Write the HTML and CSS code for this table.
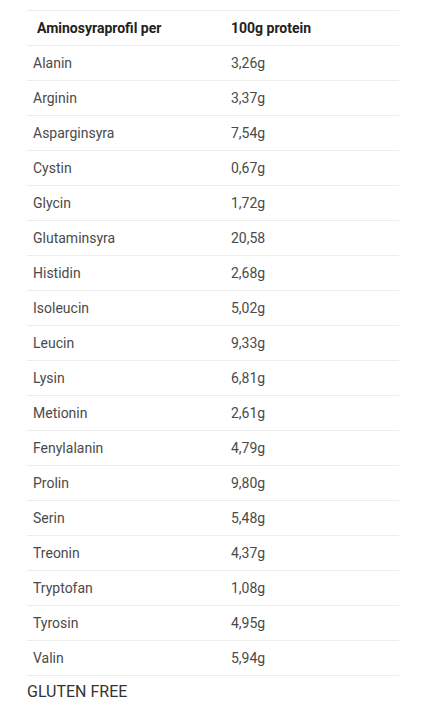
FILE: index.html
```html
<!DOCTYPE html>
<html>
<head>
<meta charset="utf-8">
<link rel="stylesheet" href="styles.css">
</head>
<body>
<div class="wrap">
<table class="amino">
<thead>
<tr><th class="c1">Aminosyraprofil per</th><th class="c2">100g protein</th></tr>
</thead>
<tbody>
<tr><td>Alanin</td><td>3,26g</td></tr>
<tr><td>Arginin</td><td>3,37g</td></tr>
<tr><td>Asparginsyra</td><td>7,54g</td></tr>
<tr><td>Cystin</td><td>0,67g</td></tr>
<tr><td>Glycin</td><td>1,72g</td></tr>
<tr><td>Glutaminsyra</td><td>20,58</td></tr>
<tr><td>Histidin</td><td>2,68g</td></tr>
<tr><td>Isoleucin</td><td>5,02g</td></tr>
<tr><td>Leucin</td><td>9,33g</td></tr>
<tr><td>Lysin</td><td>6,81g</td></tr>
<tr><td>Metionin</td><td>2,61g</td></tr>
<tr><td>Fenylalanin</td><td>4,79g</td></tr>
<tr><td>Prolin</td><td>9,80g</td></tr>
<tr><td>Serin</td><td>5,48g</td></tr>
<tr><td>Treonin</td><td>4,37g</td></tr>
<tr><td>Tryptofan</td><td>1,08g</td></tr>
<tr><td>Tyrosin</td><td>4,95g</td></tr>
<tr><td>Valin</td><td>5,94g</td></tr>
</tbody>
</table>
<p class="note">GLUTEN FREE</p>
</div>
</body>
</html>
```
FILE: styles.css
```css
html, body {
  margin: 0;
  padding: 0;
  background: #fff;
}
body {
  font-family: Roboto, "Liberation Sans", sans-serif;
  color: #4a4a4a;
}
.wrap {
  padding: 10px 22px 0 27px;
}
.amino {
  width: 372px;
  border-collapse: collapse;
  font-size: 14px;
}
.amino tr {
  height: 35px;
  border-top: 1px solid #ececec;
  border-bottom: 1px solid #ececec;
}
.amino th, .amino td {
  padding: 0 6px;
  text-align: left;
  vertical-align: middle;
}
.amino th {
  font-weight: bold;
  color: #222;
}
.amino th.c1 {
  padding-left: 10px;
}
.amino td:first-child, .amino th:first-child {
  width: 198px;
  box-sizing: border-box;
}
.note {
  margin: 6px 0 0;
  font-size: 16px;
  color: #333;
}
```
